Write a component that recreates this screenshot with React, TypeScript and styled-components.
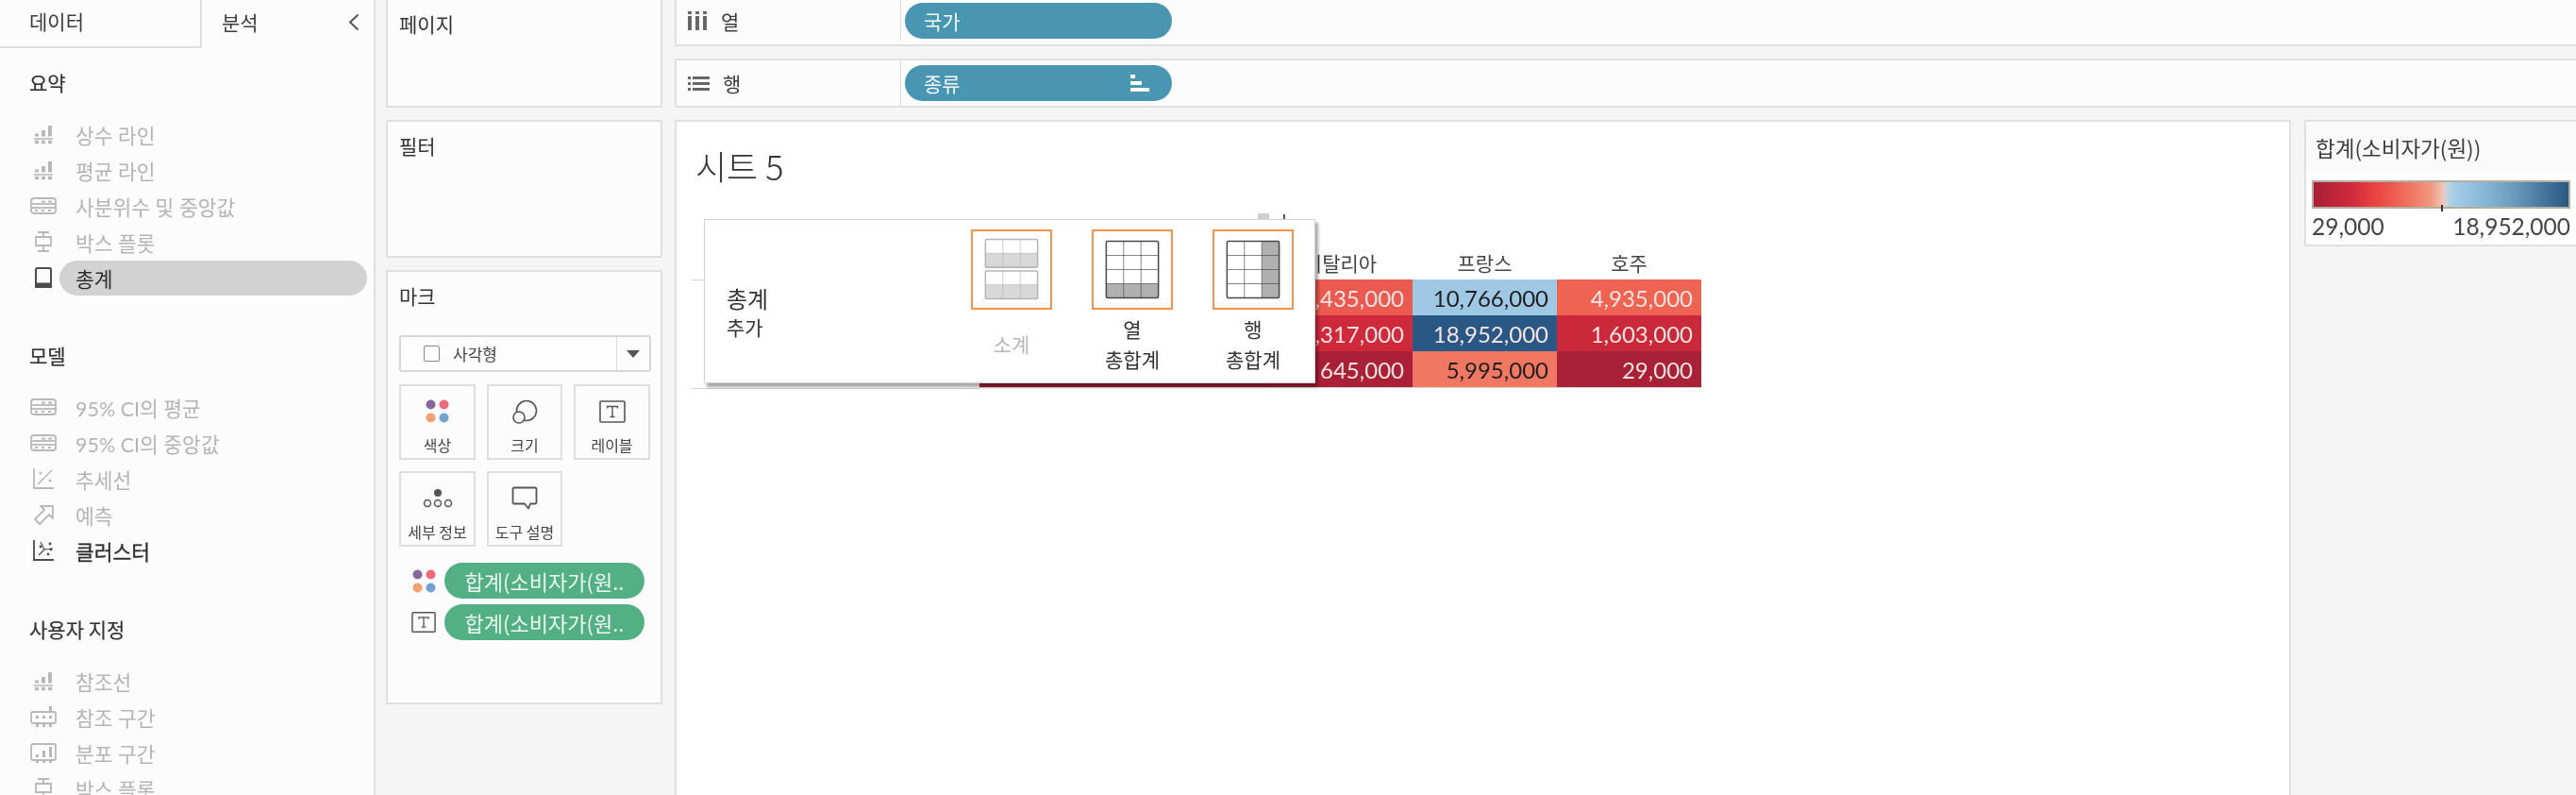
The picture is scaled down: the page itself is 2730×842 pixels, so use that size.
import React from 'react';
import styled, { createGlobalStyle } from 'styled-components';

const GlobalStyle = createGlobalStyle`
  html, body {
    margin: 0;
    padding: 0;
    background: #f5f5f5;
    overflow: hidden;
  }
  * {
    box-sizing: border-box;
  }
`;

const KR = `"Noto Sans CJK KR", "Noto Sans", sans-serif`;
const NUM = `Lato, "Noto Sans CJK KR", sans-serif`;

/* ---------------------------------- Icons --------------------------------- */

const Bars = () => (
  <>
    <path d="M3 9.500h4v3H3zM10 6h4v6.500h-4zM17 1h4v11.500h-4z" fill="currentColor" stroke="none" />
    <path d="M2 15h20" />
    <path d="M3 18.500h4M10 18.500h4M17 18.500h4" strokeWidth="3.500" />
  </>
);

const ReferenceLine = () => (
  <svg viewBox="0 0 24 21" width="24" height="21" fill="none" stroke="currentColor" strokeWidth="1.500">
    <Bars />
  </svg>
);

const Quartiles = () => (
  <svg viewBox="0 0 30 22" width="30" height="22" fill="none" stroke="currentColor" strokeWidth="1.800">
    <path d="M5 3h20a3 3 0 0 1 3 3v10a3 3 0 0 1-3 3H5a3 3 0 0 1-3-3V6a3 3 0 0 1 3-3z" />
    <path d="M2 9h26" />
    <path d="M2 13h26" />
    <path d="M13 6.500h4M20 6.500h4M6 16h3M13 16h3M20 16h3" strokeWidth="2" />
  </svg>
);

const BoxPlot = () => (
  <svg viewBox="0 0 22 24" width="22" height="24" fill="none" stroke="currentColor" strokeWidth="1.800">
    <path d="M5 2h12M11 2v5M3 7h16v9H3zM11 16v6M5 22h12" />
  </svg>
);

const Totals = () => (
  <svg viewBox="0 0 20 24" width="20" height="24" fill="none" stroke="currentColor" strokeWidth="2">
    <rect x="2" y="2" width="16" height="20" rx="1.500" />
    <path d="M2 18.500h16v3.500H2z" fill="currentColor" />
  </svg>
);

const Trend = () => (
  <svg viewBox="0 0 24 24" width="24" height="24" fill="none" stroke="currentColor" strokeWidth="1.800">
    <path d="M2 1v21h21" />
    <path d="M6 18L21 3" strokeWidth="1.400" />
    <circle cx="9" cy="6" r="1.500" fill="currentColor" stroke="none" />
    <circle cx="19" cy="14" r="1.500" fill="currentColor" stroke="none" />
  </svg>
);

const Forecast = () => (
  <svg viewBox="0 0 24 24" width="24" height="24" fill="none" stroke="currentColor" strokeWidth="1.800">
    <path d="M9 3h13v13l-4-4-10 10-5-5 10-10z" strokeLinejoin="round" />
  </svg>
);

const Cluster = () => (
  <svg viewBox="0 0 24 24" width="24" height="24" fill="none" stroke="currentColor" strokeWidth="1.800">
    <path d="M2 1v21h21" />
    <path d="M7 17l6-6M13 11l-4-8M13 11l9-1" strokeWidth="1.200" />
    <circle cx="9" cy="8" r="1.400" fill="currentColor" stroke="none" />
    <circle cx="19" cy="5" r="1.400" fill="currentColor" stroke="none" />
    <circle cx="17" cy="16" r="1.400" fill="currentColor" stroke="none" />
    <circle cx="20" cy="11" r="1.400" fill="currentColor" stroke="none" />
  </svg>
);

const RefBand = () => (
  <svg viewBox="0 0 30 24" width="30" height="24" fill="none" stroke="currentColor" strokeWidth="1.800">
    <path d="M4 7h22a2 2 0 0 1 2 2v8a2 2 0 0 1-2 2H4a2 2 0 0 1-2-2V9a2 2 0 0 1 2-2z" />
    <path d="M21 1h3v6h-3z" fill="currentColor" stroke="none" />
    <path d="M7 11h3v3H7zM14 11h3v3h-3zM21 11h3v3h-3z" fill="currentColor" stroke="none" />
    <path d="M7 19h3v4H7zM14 19h3v4h-3zM21 19h3v4h-3z" fill="currentColor" stroke="none" />
  </svg>
);

const Distribution = () => (
  <svg viewBox="0 0 30 24" width="30" height="24" fill="none" stroke="currentColor" strokeWidth="1.800">
    <path d="M4 3h22a2 2 0 0 1 2 2v13a2 2 0 0 1-2 2H4a2 2 0 0 1-2-2V5a2 2 0 0 1 2-2z" />
    <path d="M7 14h3v3H7zM14 10h3v7h-3zM21 6h3v11h-3z" fill="currentColor" stroke="none" />
    <path d="M7 20h3v3H7zM14 20h3v3h-3zM21 20h3v3h-3z" fill="currentColor" stroke="none" />
  </svg>
);

const ColorDots = () => (
  <svg viewBox="0 0 25 25" width="25" height="25">
    <circle cx="5.500" cy="5.500" r="5" fill="#86699a" />
    <circle cx="19.500" cy="5.500" r="5" fill="#ee6a7c" />
    <circle cx="5.500" cy="19.500" r="5" fill="#f2a173" />
    <circle cx="19.500" cy="19.500" r="5" fill="#73a2cf" />
  </svg>
);

const SizeIcon = () => (
  <svg viewBox="0 0 28 26" width="28" height="26" fill="none" stroke="#555" strokeWidth="1.600">
    <circle cx="16" cy="12" r="10.500" />
    <circle cx="8" cy="19" r="6" fill="#fcfcfc" />
  </svg>
);

const LabelIcon = () => (
  <svg viewBox="0 0 28 24" width="28" height="24" fill="none" stroke="#555">
    <rect x="1" y="1" width="26" height="22" rx="1" strokeWidth="1.600" />
    <path d="M8.500 8.500V6.500h11v2M14 6.500v11M11.500 17.500h5" strokeWidth="1.400" />
  </svg>
);

const DetailIcon = () => (
  <svg viewBox="0 0 32 22" width="32" height="22" fill="none" stroke="#555" strokeWidth="1.500">
    <circle cx="16" cy="5" r="4" fill="#555" stroke="none" />
    <circle cx="5" cy="16" r="3.500" />
    <circle cx="16" cy="16" r="3.500" />
    <circle cx="27" cy="16" r="3.500" />
  </svg>
);

const TooltipIcon = () => (
  <svg viewBox="0 0 28 26" width="28" height="26" fill="none" stroke="#555" strokeWidth="1.800">
    <path d="M3 1.500h22a1.500 1.500 0 0 1 1.500 1.500v14a1.500 1.500 0 0 1-1.500 1.500h-5l-2 5-4-5H3a1.500 1.500 0 0 1-1.500-1.500V3A1.500 1.500 0 0 1 3 1.500z" strokeLinejoin="round" />
  </svg>
);

const ColumnsIcon = () => (
  <svg viewBox="0 0 21 20" width="21" height="20" fill="#666">
    <path d="M0 0h4v3H0zM8 0h4v3H8zM16 0h4v3h-4zM0 5h4v15H0zM8 5h4v15H8zM16 5h4v15h-4z" />
  </svg>
);

const RowsIcon = () => (
  <svg viewBox="0 0 23 15" width="23" height="15" fill="#666">
    <path d="M0 0h3v3H0zM5 0h18v3H5zM0 6h3v3H0zM5 6h18v3H5zM0 12h3v3H0zM5 12h18v3H5z" />
  </svg>
);

const SortIcon = () => (
  <svg viewBox="0 0 20 18" width="20" height="18" fill="#fff">
    <path d="M0 0h5v4H0zM0 7h12v4H0zM0 14h20v4H0z" />
  </svg>
);

type GridProps = { x: number; y: number; h: number; rows: number; color: string; frame: string; shadeRow?: number; shadeCol?: number };

// a small crosstab drawn with three columns; shaded row or column marks the total
const MiniGrid = ({ x, y, h, rows, color, frame, shadeRow, shadeCol }: GridProps) => {
  const w = 58;
  const rowH = h / rows;
  return (
    <g>
      <rect x={x} y={y} width={w} height={h} rx="1.500" fill="#fff" />
      {shadeRow !== undefined && <rect x={x} y={y + rowH * shadeRow} width={w} height={rowH} fill={color} />}
      {shadeCol !== undefined && <rect x={x + (w * 2) / 3} y={y} width={w / 3} height={h} fill={color} />}
      {[1, 2].map((i) => (
        <path key={i} d={`M${x + (w * i) / 3} ${y}v${h}`} stroke={frame} strokeWidth="1" opacity="0.7" />
      ))}
      {Array.from({ length: rows - 1 }, (_, i) => (
        <path key={i} d={`M${x} ${y + rowH * (i + 1)}h${w}`} stroke={frame} strokeWidth="1" opacity="0.7" />
      ))}
      <rect x={x} y={y} width={w} height={h} rx="1.500" fill="none" stroke={frame} strokeWidth="1.600" />
    </g>
  );
};

/* --------------------------------- Sidebar -------------------------------- */

const summaryItems = [
  { icon: <ReferenceLine />, label: '상수 라인' },
  { icon: <ReferenceLine />, label: '평균 라인' },
  { icon: <Quartiles />, label: '사분위수 및 중앙값' },
  { icon: <BoxPlot />, label: '박스 플롯' },
];

const modelItems = [
  { icon: <Quartiles />, label: '95% CI의 평균' },
  { icon: <Quartiles />, label: '95% CI의 중앙값' },
  { icon: <Trend />, label: '추세선' },
  { icon: <Forecast />, label: '예측' },
];

const customItems = [
  { icon: <ReferenceLine />, label: '참조선' },
  { icon: <RefBand />, label: '참조 구간' },
  { icon: <Distribution />, label: '분포 구간' },
  { icon: <BoxPlot />, label: '박스 플롯' },
];

const AnalysisRow = ({ icon, label, $state }: { icon: React.ReactNode; label: string; $state?: 'on' | 'selected' }) => (
  <Row $state={$state}>
    <RowIcon>{icon}</RowIcon>
    <RowLabel $state={$state}>{label}</RowLabel>
  </Row>
);

/* ---------------------------------- Table --------------------------------- */

type Cell = { text: string; bg: string; dark?: boolean };

const tableRows: Cell[][] = [
  [
    { text: '', bg: '#c9283b' },
    { text: '', bg: '#c9283b' },
    { text: '1,435,000', bg: '#ea5a50' },
    { text: '10,766,000', bg: '#9fc8e4', dark: true },
    { text: '4,935,000', bg: '#ee6352' },
  ],
  [
    { text: '', bg: '#c9283b' },
    { text: '', bg: '#c9283b' },
    { text: '1,317,000', bg: '#cf293c' },
    { text: '18,952,000', bg: '#2a5885' },
    { text: '1,603,000', bg: '#c9293b' },
  ],
  [
    { text: '', bg: '#a81f36' },
    { text: '', bg: '#a81f36' },
    { text: '645,000', bg: '#aa2036' },
    { text: '5,995,000', bg: '#f07761', dark: true },
    { text: '29,000', bg: '#a82136' },
  ],
];

const App = () => (
  <>
    <GlobalStyle />
    <Page>
      <Sidebar>
        <Tabs>
          <Tab $inactive>데이터</Tab>
          <Tab>
            분석
            <svg viewBox="0 0 12 19" width="12" height="19" fill="none" stroke="#555" strokeWidth="2">
              <path d="M10.500 1.500L2 9.500l8.500 8" />
            </svg>
          </Tab>
        </Tabs>

        <Section>
          <SectionTitle>요약</SectionTitle>
          {summaryItems.map((item) => (
            <AnalysisRow key={item.label} icon={item.icon} label={item.label} />
          ))}
          <AnalysisRow icon={<Totals />} label="총계" $state="selected" />
        </Section>

        <Section>
          <SectionTitle>모델</SectionTitle>
          {modelItems.map((item) => (
            <AnalysisRow key={item.label} icon={item.icon} label={item.label} />
          ))}
          <AnalysisRow icon={<Cluster />} label="클러스터" $state="on" />
        </Section>

        <Section>
          <SectionTitle>사용자 지정</SectionTitle>
          {customItems.map((item) => (
            <AnalysisRow key={item.label} icon={item.icon} label={item.label} />
          ))}
        </Section>
      </Sidebar>

      <Workspace>
        <LeftColumn>
          <Card $height={114}>
            <CardTitle>페이지</CardTitle>
          </Card>
          <Card $height={146}>
            <CardTitle>필터</CardTitle>
          </Card>
          <Card $height={460}>
            <CardTitle>마크</CardTitle>
            <MarkSelect>
              <MarkSelectLabel>
                <SquareIcon />
                사각형
              </MarkSelectLabel>
              <MarkSelectCaret>
                <svg viewBox="0 0 14 8" width="14" height="8">
                  <path d="M0 0h14L7 8z" fill="#555" />
                </svg>
              </MarkSelectCaret>
            </MarkSelect>
            <MarkGrid>
              <MarkButton>
                <MarkIcon>
                  <ColorDots />
                </MarkIcon>
                색상
              </MarkButton>
              <MarkButton>
                <MarkIcon>
                  <SizeIcon />
                </MarkIcon>
                크기
              </MarkButton>
              <MarkButton>
                <MarkIcon>
                  <LabelIcon />
                </MarkIcon>
                레이블
              </MarkButton>
              <MarkButton>
                <MarkIcon>
                  <DetailIcon />
                </MarkIcon>
                세부 정보
              </MarkButton>
              <MarkButton>
                <MarkIcon>
                  <TooltipIcon />
                </MarkIcon>
                도구 설명
              </MarkButton>
            </MarkGrid>
            <MarkFields>
              <MarkField>
                <MarkFieldIcon>
                  <ColorDots />
                </MarkFieldIcon>
                <GreenPill>합계(소비자가(원..</GreenPill>
              </MarkField>
              <MarkField>
                <MarkFieldIcon>
                  <LabelIcon />
                </MarkFieldIcon>
                <GreenPill>합계(소비자가(원..</GreenPill>
              </MarkField>
            </MarkFields>
          </Card>
        </LeftColumn>

        <RightColumn>
          <Shelves>
            <Shelf $height={49} $clipped>
              <ShelfLabel>
                <ColumnsIcon />열
              </ShelfLabel>
              <ShelfBody>
                <BluePill>국가</BluePill>
              </ShelfBody>
            </Shelf>
            <Shelf $height={52}>
              <ShelfLabel>
                <RowsIcon />행
              </ShelfLabel>
              <ShelfBody>
                <BluePill>
                  종류
                  <SortIcon />
                </BluePill>
              </ShelfBody>
            </Shelf>
          </Shelves>

          <ViewRow>
            <Viz>
              <VizTitle>시트 5</VizTitle>
              <CrossTab>
                <HeaderRow>
                  <RowHeaderSpacer />
                  <ColHead />
                  <ColHead />
                  <ColHead>이탈리아</ColHead>
                  <ColHead>프랑스</ColHead>
                  <ColHead>호주</ColHead>
                </HeaderRow>
                <Body>
                  <RowHeaderSpacer $ruled />
                  <Cells>
                    {tableRows.flat().map((cell, i) => (
                      <ValueCell key={i} $bg={cell.bg} $dark={cell.dark}>
                        {cell.text}
                      </ValueCell>
                    ))}
                  </Cells>
                </Body>
              </CrossTab>

              <HeaderPeek>
                <i />
                <b />
              </HeaderPeek>

              <TotalsPopup>
                <PopupCaption>
                  <strong>총계</strong>
                  <span>추가</span>
                </PopupCaption>
                <PopupOptions>
                  <PopupOption $disabled>
                    <OptionBox>
                      <svg viewBox="0 0 86 85" width="82" height="81">
                        <MiniGrid x={14} y={9} h={31} rows={2} color="#d8d8d8" frame="#b5b5b5" shadeRow={1} />
                        <MiniGrid x={14} y={44} h={31} rows={2} color="#d8d8d8" frame="#b5b5b5" shadeRow={1} />
                      </svg>
                    </OptionBox>
                    <OptionLabel>소계</OptionLabel>
                  </PopupOption>
                  <PopupOption>
                    <OptionBox>
                      <svg viewBox="0 0 86 85" width="82" height="81">
                        <MiniGrid x={14} y={11} h={63} rows={4} color="#b0b0b0" frame="#4a4a4a" shadeRow={3} />
                      </svg>
                    </OptionBox>
                    <OptionLabel>
                      열
                      <br />
                      총합계
                    </OptionLabel>
                  </PopupOption>
                  <PopupOption>
                    <OptionBox>
                      <svg viewBox="0 0 86 85" width="82" height="81">
                        <MiniGrid x={14} y={11} h={63} rows={4} color="#b0b0b0" frame="#4a4a4a" shadeCol={2} />
                      </svg>
                    </OptionBox>
                    <OptionLabel>
                      행
                      <br />
                      총합계
                    </OptionLabel>
                  </PopupOption>
                </PopupOptions>
              </TotalsPopup>
            </Viz>

            <Legend>
              <LegendTitle>합계(소비자가(원))</LegendTitle>
              <LegendBody>
                <LegendRamp>
                  <LegendTick />
                </LegendRamp>
                <LegendScale>
                  <span>29,000</span>
                  <span>18,952,000</span>
                </LegendScale>
              </LegendBody>
            </Legend>
          </ViewRow>
        </RightColumn>
      </Workspace>
    </Page>
  </>
);

const Page = styled.div`
  display: flex;
  width: 2730px;
  height: 842px;
  overflow: hidden;
  font-family: ${KR};
  color: #333;
  background: #f5f5f5;
  filter: blur(0.5px);
`;

const Sidebar = styled.aside`
  width: 398px;
  flex: none;
  background: #fcfcfc;
  border-right: 2px solid #dedede;
`;

const Tabs = styled.div`
  display: flex;
  height: 51px;
`;

const Tab = styled.div<{ $inactive?: boolean }>`
  display: flex;
  align-items: center;
  justify-content: space-between;
  width: ${(p) => (p.$inactive ? '214px' : '182px')};
  padding: ${(p) => (p.$inactive ? '0 0 5px 31px' : '0 15px 5px 21px')};
  font-size: 21px;
  color: #3c3c3c;
  ${(p) => p.$inactive && 'border-right: 2px solid #dedede; border-bottom: 2px solid #dedede;'}
`;

const Section = styled.section`
  padding-top: 16px;
  margin-bottom: 43px;
  & + & {
    padding-top: 0;
    margin-bottom: 44px;
  }
`;

const SectionTitle = styled.h3`
  margin: 0 0 16px 31px;
  height: 40px;
  line-height: 40px;
  font-size: 21px;
  font-weight: 400;
  color: #333;
  -webkit-text-stroke: 0.2px #333;
`;

const Row = styled.div<{ $state?: 'on' | 'selected' }>`
  display: flex;
  align-items: center;
  height: 38px;
  color: ${(p) => (p.$state ? '#4d4d4d' : '#b8b8b8')};
`;

const RowIcon = styled.span`
  display: flex;
  align-items: center;
  justify-content: center;
  width: 30px;
  margin-left: 31px;
  flex: none;
`;

const RowLabel = styled.span<{ $state?: 'on' | 'selected' }>`
  display: flex;
  align-items: center;
  flex: 1;
  height: 37px;
  margin: 0 7px 0 2px;
  padding-left: 17px;
  border-radius: 19px;
  font-family: ${NUM};
  font-size: 21.500px;
  color: ${(p) => (p.$state ? '#2e2e2e' : '#b4b4b4')};
  ${(p) => p.$state === 'selected' && 'background: #d2d2d2;'}
  ${(p) => p.$state === 'on' && '-webkit-text-stroke: 0.3px #2e2e2e;'}
`;

const Workspace = styled.main`
  display: flex;
  flex: 1;
  gap: 13px;
  padding-left: 11px;
  min-width: 0;
`;

const LeftColumn = styled.div`
  display: flex;
  flex-direction: column;
  flex: none;
  gap: 13px;
  width: 293px;
`;

const Card = styled.section<{ $height: number }>`
  height: ${(p) => p.$height}px;
  padding: 0 12px;
  background: #fcfcfc;
  border: 2px solid #e0e0e0;
  &:first-child {
    border-top: none;
  }
`;

const CardTitle = styled.h4`
  margin: 7px 0 0;
  height: 36px;
  line-height: 36px;
  font-size: 21px;
  font-weight: 400;
  color: #333;
`;

const MarkSelect = styled.div`
  display: flex;
  height: 39px;
  width: 267px;
  margin-top: 24px;
  border: 2px solid #d6d6d6;
  border-radius: 3px;
  background: #fdfdfd;
`;

const MarkSelectLabel = styled.div`
  display: flex;
  align-items: center;
  flex: 1;
  gap: 14px;
  padding-left: 24px;
  font-size: 17px;
  color: #444;
  border-right: 1px solid #dcdcdc;
`;

const SquareIcon = styled.i`
  display: block;
  width: 17px;
  height: 17px;
  border: 1.500px solid #8a8a8a;
  border-radius: 2px;
`;

const MarkSelectCaret = styled.div`
  display: flex;
  align-items: center;
  justify-content: center;
  width: 34px;
`;

const MarkGrid = styled.div`
  display: grid;
  grid-template-columns: 81px 80px 81px;
  grid-auto-rows: 80px;
  column-gap: 12px;
  row-gap: 12px;
  margin-top: 13px;
`;

const MarkButton = styled.div`
  display: flex;
  flex-direction: column;
  align-items: center;
  padding-top: 13px;
  border: 2px solid #dedede;
  font-size: 16px;
  color: #444;
  white-space: nowrap;
`;

const MarkIcon = styled.span`
  display: flex;
  align-items: center;
  justify-content: center;
  height: 27px;
  margin-bottom: 10px;
`;

const MarkFields = styled.div`
  display: flex;
  flex-direction: column;
  gap: 6px;
  margin-top: 17px;
`;

const MarkField = styled.div`
  display: flex;
  align-items: center;
  gap: 9px;
  padding-left: 13px;
`;

const MarkFieldIcon = styled.span`
  display: flex;
  align-items: center;
  justify-content: center;
  width: 26px;
  flex: none;
`;

const GreenPill = styled.div`
  display: flex;
  align-items: center;
  justify-content: center;
  width: 212px;
  height: 38px;
  border-radius: 19px;
  background: #52b084;
  color: #eef8f2;
  font-size: 22px;
  white-space: nowrap;
  overflow: hidden;
`;

const RightColumn = styled.div`
  display: flex;
  flex-direction: column;
  flex: 1;
  gap: 13px;
  min-width: 0;
`;

const Shelves = styled.div`
  display: flex;
  flex-direction: column;
  gap: 13px;
`;

const Shelf = styled.div<{ $height: number; $clipped?: boolean }>`
  display: flex;
  height: ${(p) => p.$height}px;
  align-items: stretch;
  background: #fcfcfc;
  border: 2px solid #e0e0e0;
  border-right: none;
  ${(p) => p.$clipped && 'border-top: none; padding-bottom: 4px;'}
`;

const ShelfLabel = styled.div`
  display: flex;
  align-items: center;
  gap: 14px;
  width: 238px;
  padding-left: 12px;
  font-size: 21px;
  color: #3c3c3c;
`;

const ShelfBody = styled.div`
  display: flex;
  align-items: center;
  padding-left: 4px;
  box-shadow: -1px 0 0 #dcdcdc;
`;

const BluePill = styled.div`
  display: flex;
  align-items: center;
  justify-content: space-between;
  width: 283px;
  height: 38px;
  padding: 0 24px 0 20px;
  border-radius: 19px;
  background: #4996b2;
  color: #f1f8fb;
  font-size: 21px;
`;

const ViewRow = styled.div`
  display: flex;
  flex: 1;
  gap: 14px;
`;

const Viz = styled.section`
  position: relative;
  flex: none;
  width: 1713px;
  background: #fff;
  border: 2px solid #e0e0e0;
  border-bottom: none;
`;

const VizTitle = styled.h1`
  margin: 0;
  padding: 22px 0 0 20px;
  height: 131px;
  line-height: 48px;
  font-size: 36px;
  font-weight: 300;
  color: #333;
`;

const CrossTab = styled.div`
  padding-left: 16px;
  font-family: ${NUM};
`;

const HeaderRow = styled.div`
  display: flex;
  height: 36px;
  align-items: center;
`;

const RowHeaderSpacer = styled.div<{ $ruled?: boolean }>`
  flex: none;
  width: 305px;
  ${(p) => p.$ruled && `
    height: 116px;
    border-top: 1px solid #d4d4d4;
    border-bottom: 1px solid #d4d4d4;
  `}
`;

const ColHead = styled.div`
  flex: none;
  width: 153px;
  text-align: center;
  font-family: ${KR};
  font-size: 21px;
  color: #444;
`;

const Body = styled.div`
  display: flex;
`;

const Cells = styled.div`
  display: grid;
  grid-template-columns: repeat(5, 153px);
  grid-auto-rows: 38px;
  height: 115px;
  border-bottom: 1px solid #d8d8d8;
`;

const ValueCell = styled.div<{ $bg: string; $dark?: boolean }>`
  display: flex;
  align-items: center;
  justify-content: flex-end;
  padding-right: 9px;
  background: ${(p) => p.$bg};
  color: ${(p) => (p.$dark ? '#1f1f1f' : '#f8e4e2')};
  font-size: 24px;
`;

const HeaderPeek = styled.div`
  position: absolute;
  left: 616px;
  top: 97px;
  display: flex;
  align-items: flex-end;
  gap: 15px;
  i {
    display: block;
    width: 12px;
    height: 6px;
    background: #cfcfcf;
  }
  b {
    display: block;
    width: 2px;
    height: 5px;
    background: #555;
  }
`;

const TotalsPopup = styled.div`
  position: absolute;
  left: 29px;
  top: 103px;
  display: flex;
  align-items: stretch;
  justify-content: space-between;
  width: 648px;
  height: 174px;
  padding: 10px 22px 0 23px;
  background: #fff;
  border: 1px solid #d2d2d2;
  box-shadow: 3px 4px 3px rgba(0, 0, 0, 0.35);
`;

const PopupCaption = styled.div`
  display: flex;
  flex-direction: column;
  justify-content: center;
  padding-top: 12px;
  color: #333;
  strong {
    font-size: 24px;
    font-weight: 400;
    line-height: 32px;
  }
  span {
    font-size: 21px;
    line-height: 28px;
  }
`;

const PopupOptions = styled.div`
  display: flex;
  gap: 42px;
`;

const PopupOption = styled.div<{ $disabled?: boolean }>`
  display: flex;
  flex-direction: column;
  align-items: center;
  width: 86px;
  color: ${(p) => (p.$disabled ? '#b8b8b8' : '#333')};
`;

const OptionBox = styled.div`
  display: flex;
  align-items: center;
  justify-content: center;
  width: 86px;
  height: 85px;
  border: 2px solid #f4934b;
`;

const OptionLabel = styled.div`
  flex: 1;
  display: flex;
  align-items: center;
  padding-bottom: 5px;
  text-align: center;
  font-size: 21px;
  line-height: 32px;
`;

const Legend = styled.aside`
  flex: 1;
  height: 134px;
  display: flex;
  flex-direction: column;
  background: #fff;
  border: 2px solid #e0e0e0;
  border-right: none;
`;

const LegendTitle = styled.div`
  height: 53px;
  padding: 9px 0 0 10px;
  line-height: 36px;
  font-size: 22.500px;
  color: #3c3c3c;
  background: #fafafa;
`;

const LegendBody = styled.div`
  padding: 9px 6px 0;
`;

const LegendRamp = styled.div`
  position: relative;
  height: 30px;
  width: 274px;
  border: 2px solid #b5ad9d;
  background: linear-gradient(
    to right,
    #a81f36 0%,
    #cc2a3d 14%,
    #e9423f 24%,
    #ef7560 38%,
    #f0987f 46%,
    #f2c6bb 51%,
    #c8d4dc 52%,
    #a6cde6 55%,
    #8fbcdc 64%,
    #6b9dbf 78%,
    #3f7098 92%,
    #2a5885 100%
  );
`;

const LegendTick = styled.i`
  position: absolute;
  left: 135px;
  bottom: -5px;
  width: 2px;
  height: 7px;
  background: #333;
`;

const LegendScale = styled.div`
  display: flex;
  justify-content: space-between;
  width: 274px;
  height: 32px;
  line-height: 38px;
  font-family: ${NUM};
  font-size: 24.500px;
  color: #444;
`;

export default App;
